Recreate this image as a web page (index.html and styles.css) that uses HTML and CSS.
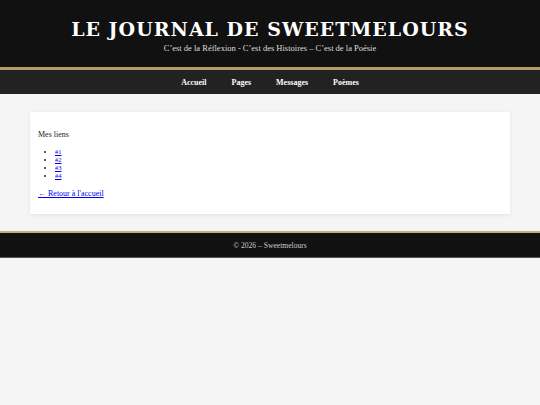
FILE: index.html
```html
<!DOCTYPE html>
<html lang="fr">
<head>
<meta charset="utf-8">
<title>Le Journal de Sweetmelours</title>
<link rel="stylesheet" href="styles.css">
</head>
<body>
<header class="site-header">
  <h1 class="site-title">LE JOURNAL DE SWEETMELOURS</h1>
  <p class="site-tagline">C’est de la Réflexion - C’est des Histoires – C’est de la Poésie</p>
</header>
<nav class="site-nav">
  <a href="#">Accueil</a>
  <a href="#">Pages</a>
  <a href="#">Messages</a>
  <a href="#">Poèmes</a>
</nav>
<main class="main">
  <section class="card">
    <p class="card-title">Mes liens</p>
    <ul class="links">
      <li><a href="#">#1</a></li>
      <li><a href="#">#2</a></li>
      <li><a href="#">#3</a></li>
      <li><a href="#">#4</a></li>
    </ul>
    <a class="back" href="#">← Retour à l'accueil</a>
  </section>
</main>
<footer class="site-footer">© 2026 – Sweetmelours</footer>
</body>
</html>
```
FILE: styles.css
```css
html, body {
  margin: 0;
  padding: 0;
}
body {
  background: #f5f5f5;
  font-family: "Liberation Serif", Georgia, serif;
  color: #222;
}
.site-header {
  background: #111111;
  border-bottom: 3px solid #b8996a;
  text-align: center;
  color: #fff;
  padding-top: 15px;
  height: 52px;
}
.site-title {
  margin: 0;
  font-family: "DejaVu Serif", Georgia, serif;
  font-size: 19px;
  line-height: 28px;
  font-weight: bold;
  letter-spacing: 1px;
  color: #ffffff;
}
.site-tagline {
  margin: 0;
  font-size: 8.5px;
  line-height: 11px;
  color: #dddddd;
}
.site-nav {
  background: #222222;
  height: 24px;
  display: flex;
  justify-content: center;
  align-items: center;
  gap: 25px;
}
.site-nav a {
  color: #ffffff;
  font-size: 8px;
  font-weight: bold;
  text-decoration: none;
}
.main {
  padding: 18px 30px 17px;
}
.card {
  background: #ffffff;
  box-shadow: 0 1px 4px rgba(0, 0, 0, 0.08);
  padding: 16px 8px 13px;
}
.card-title {
  margin: 0;
  font-size: 8px;
  line-height: 14px;
  color: #222;
}
.links {
  margin: 6px 0 7px;
  padding-left: 17px;
  font-size: 6.5px;
  line-height: 8px;
}
.links a, .back {
  color: #0000ee;
}
.back {
  display: block;
  font-size: 8px;
  line-height: 14px;
}
.site-footer {
  background: #111111;
  border-top: 2px solid #c5ab80;
  border-bottom: 1px solid #555;
  height: 24px;
  display: flex;
  align-items: center;
  justify-content: center;
  color: #cccccc;
  font-size: 7.6px;
}
```
